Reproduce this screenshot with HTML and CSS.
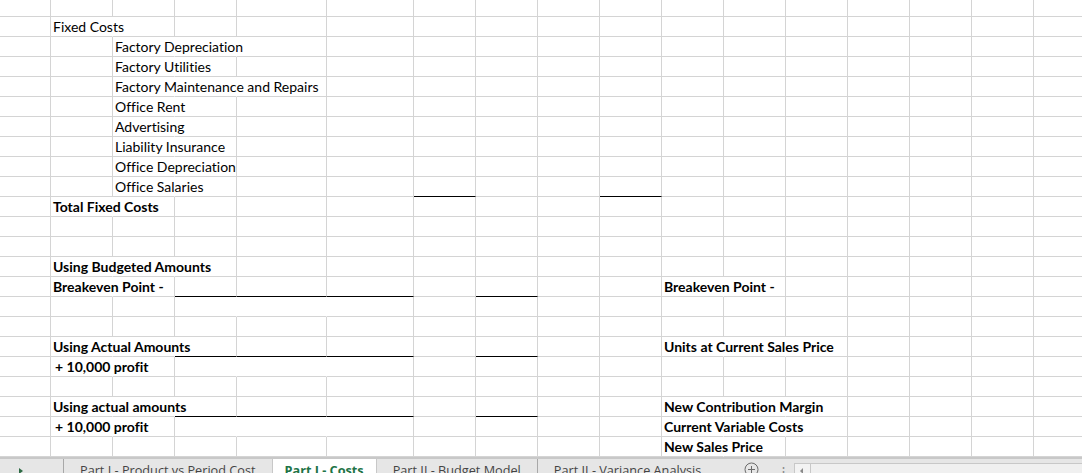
FILE: index.html
```html
<!DOCTYPE html>
<html lang="en">
<head>
<meta charset="utf-8">
<title>Part I - Costs</title>
<link rel="stylesheet" href="styles.css">
</head>
<body>
<div class="sheet">
  <div class="row first"><div class="c"></div><div class="c"></div><div class="c"></div><div class="c"></div><div class="c"></div><div class="c"></div><div class="c"></div><div class="c"></div><div class="c"></div><div class="c"></div><div class="c"></div><div class="c"></div><div class="c"></div><div class="c"></div><div class="c"></div><div class="c"></div><div class="c"></div></div>
  <div class="row"><div class="c"></div><div class="c ov">Fixed Costs</div><div class="c"></div><div class="c"></div><div class="c"></div><div class="c"></div><div class="c"></div><div class="c"></div><div class="c"></div><div class="c"></div><div class="c"></div><div class="c"></div><div class="c"></div><div class="c"></div><div class="c"></div><div class="c"></div><div class="c"></div></div>
  <div class="row"><div class="c"></div><div class="c"></div><div class="c ov">Factory Depreciation</div><div class="c ov"></div><div class="c"></div><div class="c"></div><div class="c"></div><div class="c"></div><div class="c"></div><div class="c"></div><div class="c"></div><div class="c"></div><div class="c"></div><div class="c"></div><div class="c"></div><div class="c"></div><div class="c"></div></div>
  <div class="row"><div class="c"></div><div class="c"></div><div class="c ov">Factory Utilities</div><div class="c"></div><div class="c"></div><div class="c"></div><div class="c"></div><div class="c"></div><div class="c"></div><div class="c"></div><div class="c"></div><div class="c"></div><div class="c"></div><div class="c"></div><div class="c"></div><div class="c"></div><div class="c"></div></div>
  <div class="row"><div class="c"></div><div class="c"></div><div class="c ov">Factory Maintenance and Repairs</div><div class="c ov"></div><div class="c"></div><div class="c"></div><div class="c"></div><div class="c"></div><div class="c"></div><div class="c"></div><div class="c"></div><div class="c"></div><div class="c"></div><div class="c"></div><div class="c"></div><div class="c"></div><div class="c"></div></div>
  <div class="row"><div class="c"></div><div class="c"></div><div class="c ov">Office Rent</div><div class="c"></div><div class="c"></div><div class="c"></div><div class="c"></div><div class="c"></div><div class="c"></div><div class="c"></div><div class="c"></div><div class="c"></div><div class="c"></div><div class="c"></div><div class="c"></div><div class="c"></div><div class="c"></div></div>
  <div class="row"><div class="c"></div><div class="c"></div><div class="c ov">Advertising</div><div class="c"></div><div class="c"></div><div class="c"></div><div class="c"></div><div class="c"></div><div class="c"></div><div class="c"></div><div class="c"></div><div class="c"></div><div class="c"></div><div class="c"></div><div class="c"></div><div class="c"></div><div class="c"></div></div>
  <div class="row"><div class="c"></div><div class="c"></div><div class="c ov">Liability Insurance</div><div class="c"></div><div class="c"></div><div class="c"></div><div class="c"></div><div class="c"></div><div class="c"></div><div class="c"></div><div class="c"></div><div class="c"></div><div class="c"></div><div class="c"></div><div class="c"></div><div class="c"></div><div class="c"></div></div>
  <div class="row"><div class="c"></div><div class="c"></div><div class="c ov">Office Depreciation</div><div class="c"></div><div class="c"></div><div class="c"></div><div class="c"></div><div class="c"></div><div class="c"></div><div class="c"></div><div class="c"></div><div class="c"></div><div class="c"></div><div class="c"></div><div class="c"></div><div class="c"></div><div class="c"></div></div>
  <div class="row"><div class="c"></div><div class="c"></div><div class="c ov">Office Salaries</div><div class="c"></div><div class="c"></div><div class="c"></div><div class="c ul"></div><div class="c"></div><div class="c"></div><div class="c ul"></div><div class="c"></div><div class="c"></div><div class="c"></div><div class="c"></div><div class="c"></div><div class="c"></div><div class="c"></div></div>
  <div class="row"><div class="c"></div><div class="c ov b">Total Fixed Costs</div><div class="c"></div><div class="c"></div><div class="c"></div><div class="c"></div><div class="c"></div><div class="c"></div><div class="c"></div><div class="c"></div><div class="c"></div><div class="c"></div><div class="c"></div><div class="c"></div><div class="c"></div><div class="c"></div><div class="c"></div></div>
  <div class="row"><div class="c"></div><div class="c"></div><div class="c"></div><div class="c"></div><div class="c"></div><div class="c"></div><div class="c"></div><div class="c"></div><div class="c"></div><div class="c"></div><div class="c"></div><div class="c"></div><div class="c"></div><div class="c"></div><div class="c"></div><div class="c"></div><div class="c"></div></div>
  <div class="row"><div class="c"></div><div class="c"></div><div class="c"></div><div class="c"></div><div class="c"></div><div class="c"></div><div class="c"></div><div class="c"></div><div class="c"></div><div class="c"></div><div class="c"></div><div class="c"></div><div class="c"></div><div class="c"></div><div class="c"></div><div class="c"></div><div class="c"></div></div>
  <div class="row"><div class="c"></div><div class="c ov b">Using Budgeted Amounts</div><div class="c ov"></div><div class="c"></div><div class="c"></div><div class="c"></div><div class="c"></div><div class="c"></div><div class="c"></div><div class="c"></div><div class="c"></div><div class="c"></div><div class="c"></div><div class="c"></div><div class="c"></div><div class="c"></div><div class="c"></div></div>
  <div class="row"><div class="c"></div><div class="c ov b">Breakeven Point -</div><div class="c"></div><div class="c ul"></div><div class="c ul"></div><div class="c ul"></div><div class="c"></div><div class="c ul"></div><div class="c"></div><div class="c"></div><div class="c ov b">Breakeven Point -</div><div class="c"></div><div class="c"></div><div class="c"></div><div class="c"></div><div class="c"></div><div class="c"></div></div>
  <div class="row"><div class="c"></div><div class="c"></div><div class="c"></div><div class="c ov"></div><div class="c ov"></div><div class="c"></div><div class="c"></div><div class="c"></div><div class="c"></div><div class="c"></div><div class="c"></div><div class="c"></div><div class="c"></div><div class="c"></div><div class="c"></div><div class="c"></div><div class="c"></div></div>
  <div class="row"><div class="c"></div><div class="c"></div><div class="c"></div><div class="c"></div><div class="c"></div><div class="c"></div><div class="c"></div><div class="c"></div><div class="c"></div><div class="c"></div><div class="c"></div><div class="c"></div><div class="c"></div><div class="c"></div><div class="c"></div><div class="c"></div><div class="c"></div></div>
  <div class="row"><div class="c"></div><div class="c ov b">Using Actual Amounts</div><div class="c ov"></div><div class="c ul"></div><div class="c ul"></div><div class="c ul"></div><div class="c"></div><div class="c ul"></div><div class="c"></div><div class="c"></div><div class="c ov b">Units at Current Sales Price</div><div class="c ov"></div><div class="c"></div><div class="c"></div><div class="c"></div><div class="c"></div><div class="c"></div></div>
  <div class="row"><div class="c"></div><div class="c ov b plus">+ 10,000 profit</div><div class="c"></div><div class="c ov"></div><div class="c ov"></div><div class="c"></div><div class="c"></div><div class="c"></div><div class="c"></div><div class="c"></div><div class="c"></div><div class="c"></div><div class="c"></div><div class="c"></div><div class="c"></div><div class="c"></div><div class="c"></div></div>
  <div class="row"><div class="c"></div><div class="c"></div><div class="c"></div><div class="c"></div><div class="c"></div><div class="c"></div><div class="c"></div><div class="c"></div><div class="c"></div><div class="c"></div><div class="c"></div><div class="c"></div><div class="c"></div><div class="c"></div><div class="c"></div><div class="c"></div><div class="c"></div></div>
  <div class="row"><div class="c"></div><div class="c ov b">Using actual amounts</div><div class="c ov"></div><div class="c ul"></div><div class="c ul"></div><div class="c ul"></div><div class="c"></div><div class="c ul"></div><div class="c"></div><div class="c"></div><div class="c ov b">New Contribution Margin</div><div class="c ov"></div><div class="c"></div><div class="c"></div><div class="c"></div><div class="c"></div><div class="c"></div></div>
  <div class="row"><div class="c"></div><div class="c ov b plus">+ 10,000 profit</div><div class="c"></div><div class="c ov"></div><div class="c ov"></div><div class="c"></div><div class="c"></div><div class="c"></div><div class="c"></div><div class="c"></div><div class="c ov b">Current Variable Costs</div><div class="c ov"></div><div class="c"></div><div class="c"></div><div class="c"></div><div class="c"></div><div class="c"></div></div>
  <div class="row"><div class="c"></div><div class="c"></div><div class="c"></div><div class="c"></div><div class="c"></div><div class="c"></div><div class="c"></div><div class="c"></div><div class="c"></div><div class="c"></div><div class="c ov b">New Sales Price</div><div class="c"></div><div class="c"></div><div class="c"></div><div class="c"></div><div class="c"></div><div class="c"></div></div>
</div>
<div class="tabbar">
  <div class="nav"><span class="nav-arrow"></span></div>
  <div class="tab">Part I - Product vs Period Cost</div>
  <div class="tab active">Part I - Costs</div>
  <div class="tab sep">Part II - Budget Model</div>
  <div class="tab">Part II - Variance Analysis</div>
  <div class="add">
    <svg width="15" height="15" viewBox="0 0 15 15"><circle cx="7.5" cy="7.5" r="6.5" fill="none" stroke="#6b6b6b" stroke-width="1"/><path d="M7.5 4v7M4 7.5h7" stroke="#6b6b6b" stroke-width="1"/></svg>
  </div>
  <div class="dots">&#8942;</div>
  <div class="scroll">
    <div class="scroll-btn"><span class="scroll-arrow"></span></div>
    <div class="scroll-track"></div>
  </div>
</div>
</body>
</html>
```
FILE: styles.css
```css
html, body {
  margin: 0;
  padding: 0;
  background: #ffffff;
}
body {
  width: 1082px;
  height: 473px;
  overflow: hidden;
  font-family: "Lato", "Liberation Sans", sans-serif;
  font-variant-ligatures: none;
}
.sheet {
  display: flex;
  flex-direction: column;
  width: 1082px;
  overflow: hidden;
}
.row {
  display: grid;
  grid-template-columns: 51px 62px 62px 62px 90px 87px 62px 62px 62px 62px 62px 62px 62px 62px 62px 62px 62px;
  height: 20px;
}
.row.first {
  height: 17px;
}
.c {
  box-sizing: border-box;
  border-right: 1px solid #d4d4d4;
  border-bottom: 1px solid #d4d4d4;
  padding-left: 2px;
  white-space: nowrap;
  overflow: visible;
  font-size: 14px;
  line-height: 19px;
  color: #000000;
}
.c.ov {
  border-right-color: transparent;
}
.c.ul {
  border-bottom-color: #000000;
}
.c.b {
  font-weight: bold;
}
.c.plus {
  padding-left: 4px;
}
.tabbar {
  display: flex;
  align-items: stretch;
  height: 14px;
  border-top: 2px solid #c8c8c8;
  background: #e6e6e6;
  font-family: "Open Sans", "Liberation Sans", sans-serif;
  font-size: 12.7px;
  color: #444444;
  overflow: hidden;
}
.nav {
  box-sizing: border-box;
  width: 64px;
  border-right: 1px solid #a8a8a8;
  position: relative;
}
.nav-arrow {
  position: absolute;
  left: 19px;
  top: 9px;
  width: 0;
  height: 0;
  border-top: 3px solid transparent;
  border-bottom: 3px solid transparent;
  border-left: 4px solid #2e6b45;
}
.tab {
  padding: 0 16px;
  line-height: 23px;
  white-space: nowrap;
}
.tab.active {
  background: #ffffff;
  border-left: 1px solid #c8c8c8;
  border-right: 1px solid #c8c8c8;
  margin-top: -2px;
  line-height: 27px;
  color: #217346;
  font-weight: bold;
  padding: 0 12px;
}
.tab.sep {
  border-right: 1px solid #a8a8a8;
}
.add {
  margin-left: 27px;
  padding-top: 3px;
}
.dots {
  margin-left: 18px;
  color: #8a8a8a;
  line-height: 24px;
}
.scroll {
  display: flex;
  margin-left: 4px;
  flex: 1;
  padding-top: 4px;
}
.scroll-btn {
  box-sizing: border-box;
  width: 17px;
  height: 16px;
  background: #f3f3f3;
  border: 1px solid #c8c8c8;
  position: relative;
}
.scroll-arrow {
  position: absolute;
  left: 5px;
  top: 4px;
  width: 0;
  height: 0;
  border-top: 3px solid transparent;
  border-bottom: 3px solid transparent;
  border-right: 3px solid #8a8a8a;
}
.scroll-track {
  flex: 1;
  background: #f0f0f0;
  border-top: 1px solid #c8c8c8;
}
```
